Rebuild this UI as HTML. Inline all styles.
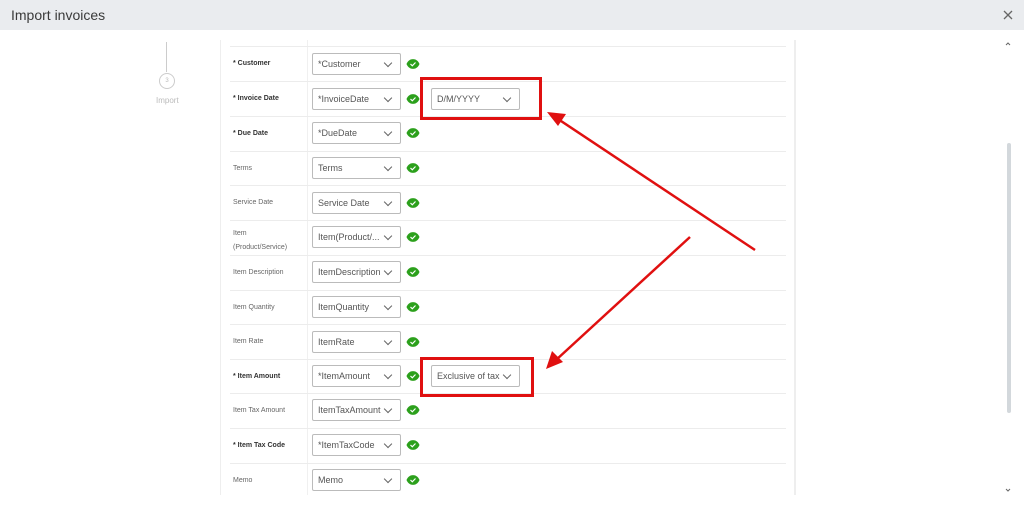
<!DOCTYPE html>
<html><head><meta charset="utf-8"><style>
*{margin:0;padding:0;box-sizing:border-box}
body{width:1024px;height:505px;overflow:hidden;background:#fff;font-family:"Liberation Sans",sans-serif;position:relative}
.hdr{position:absolute;left:0;top:0;width:1024px;height:30px;background:#eaecef}
.hdr h1{position:absolute;left:11px;top:7px;font-size:14px;font-weight:normal;color:#3a3a3a}
.panel{position:absolute;left:220px;top:40px;width:576px;height:455px;border-left:1px solid #eee;border-right:2px solid #eee}
.col{position:absolute;left:307px;top:40px;width:1px;height:455px;background:#f0f0f0}
.sep{position:absolute;left:230px;width:556px;height:1px;background:#ececec}
.lbl{position:absolute;left:233px;font-size:7px;color:#666}
.lbl b{color:#333}
.dd{position:absolute;left:312px;width:89px;height:22px;border:1px solid #bbb;border-radius:2px;font-size:9px;color:#555;padding:5px 0 0 5px;white-space:nowrap;overflow:hidden}
.dd:after{content:"";position:absolute;right:9px;top:6px;width:5px;height:5px;border-right:1.2px solid #666;border-bottom:1.2px solid #666;transform:rotate(45deg)}
.ck{position:absolute;left:406px;width:14px;height:12px}
.red{position:absolute;border:3px solid #e01010}
</style></head><body>
<div class="hdr"><h1>Import invoices</h1>
<svg style="position:absolute;left:1003px;top:10px" width="10" height="10"><path d="M1 1L9 9M9 1L1 9" stroke="#666" stroke-width="1.3"/></svg></div>
<div style="position:absolute;left:166px;top:42px;width:1px;height:30px;background:#ccc"></div>
<div style="position:absolute;left:159px;top:73px;width:16px;height:16px;border:1px solid #ccc;border-radius:50%;font-size:6px;color:#bbb;text-align:center;line-height:14px">3</div>
<div style="position:absolute;left:156px;top:96px;font-size:8px;color:#bbb">Import</div>
<div class="panel"></div><div class="col"></div>
<div style="position:absolute;left:1007px;top:143px;width:4px;height:270px;background:#d3d8dc;border-radius:2px"></div>
<svg style="position:absolute;left:1005px;top:42px" width="6" height="4"><path d="M1 3L3 1L5 3" stroke="#666" fill="none"/></svg>
<svg style="position:absolute;left:1005px;top:488px" width="6" height="4"><path d="M1 1L3 3L5 1" stroke="#666" fill="none"/></svg>

<div class="sep" style="top:46px"></div><div class="sep" style="top:81px"></div><div class="sep" style="top:116px"></div><div class="sep" style="top:151px"></div><div class="sep" style="top:185px"></div><div class="sep" style="top:220px"></div><div class="sep" style="top:255px"></div><div class="sep" style="top:290px"></div><div class="sep" style="top:324px"></div><div class="sep" style="top:359px"></div><div class="sep" style="top:393px"></div><div class="sep" style="top:428px"></div><div class="sep" style="top:463px"></div>

<svg width="0" height="0" style="position:absolute"><defs><g id="c"><path d="M0.5 6C3 -0.5 11 -0.5 13.5 6C11 12.5 3 12.5 0.5 6Z" fill="#2ca01c"/><path d="M4.5 6L6.3 7.8L9.5 4.5" stroke="#fff" stroke-width="1.2" fill="none"/></g></defs></svg>

<div class="lbl" style="top:60px"><b>* Customer</b></div><div class="dd" style="top:53px">*Customer</div><svg class="ck" style="top:58px"><use href="#c"/></svg>
<div class="lbl" style="top:95px"><b>* Invoice Date</b></div><div class="dd" style="top:88px">*InvoiceDate</div><svg class="ck" style="top:93px"><use href="#c"/></svg>
<div class="lbl" style="top:130px"><b>* Due Date</b></div><div class="dd" style="top:122px">*DueDate</div><svg class="ck" style="top:127px"><use href="#c"/></svg>
<div class="lbl" style="top:165px">Terms</div><div class="dd" style="top:157px">Terms</div><svg class="ck" style="top:162px"><use href="#c"/></svg>
<div class="lbl" style="top:199px">Service Date</div><div class="dd" style="top:192px">Service Date</div><svg class="ck" style="top:197px"><use href="#c"/></svg>
<div class="lbl" style="top:227px;line-height:14px">Item<br>(Product/Service)</div><div class="dd" style="top:226px">Item(Product/...</div><svg class="ck" style="top:231px"><use href="#c"/></svg>
<div class="lbl" style="top:269px">Item Description</div><div class="dd" style="top:261px">ItemDescription</div><svg class="ck" style="top:266px"><use href="#c"/></svg>
<div class="lbl" style="top:304px">Item Quantity</div><div class="dd" style="top:296px">ItemQuantity</div><svg class="ck" style="top:301px"><use href="#c"/></svg>
<div class="lbl" style="top:338px">Item Rate</div><div class="dd" style="top:331px">ItemRate</div><svg class="ck" style="top:336px"><use href="#c"/></svg>
<div class="lbl" style="top:373px"><b>* Item Amount</b></div><div class="dd" style="top:365px">*ItemAmount</div><svg class="ck" style="top:370px"><use href="#c"/></svg>
<div class="lbl" style="top:407px">Item Tax Amount</div><div class="dd" style="top:399px">ItemTaxAmount</div><svg class="ck" style="top:404px"><use href="#c"/></svg>
<div class="lbl" style="top:442px"><b>* Item Tax Code</b></div><div class="dd" style="top:434px">*ItemTaxCode</div><svg class="ck" style="top:439px"><use href="#c"/></svg>
<div class="lbl" style="top:477px">Memo</div><div class="dd" style="top:469px">Memo</div><svg class="ck" style="top:474px"><use href="#c"/></svg>

<div class="dd" style="left:431px;top:88px;width:89px">D/M/YYYY</div>
<div class="dd" style="left:431px;top:365px;width:89px">Exclusive of tax</div>
<div class="red" style="left:420px;top:77px;width:122px;height:43px"></div>
<div class="red" style="left:420px;top:357px;width:114px;height:40px"></div>
<svg style="position:absolute;left:0;top:0" width="1024" height="505">
<g stroke="#e01010" stroke-width="2.5" fill="#e01010">
<line x1="755" y1="250" x2="558" y2="119"/>
<polygon points="547,112 566,114 558,126" stroke="none"/>
<line x1="690" y1="237" x2="556" y2="360"/>
<polygon points="546,369 552,351 563,362" stroke="none"/>
</g></svg>
</body></html>
